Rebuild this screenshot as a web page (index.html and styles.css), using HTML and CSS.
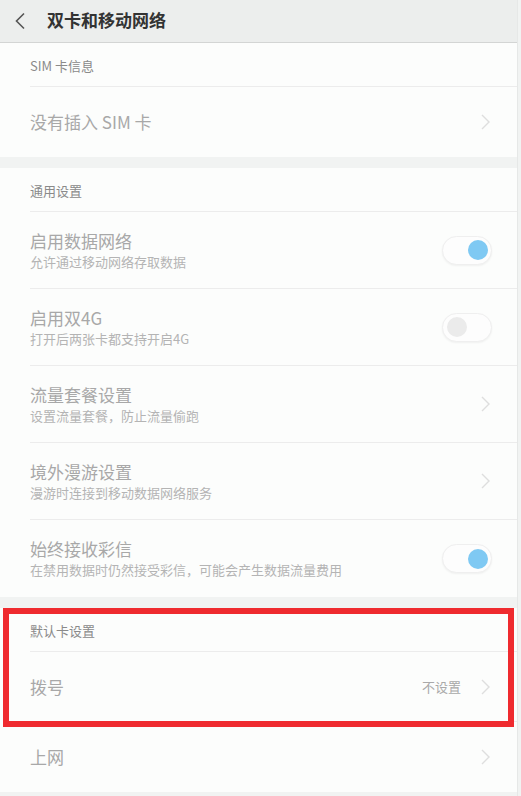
FILE: index.html
```html
<!DOCTYPE html>
<html lang="zh-CN">
<head>
<meta charset="utf-8">
<title>双卡和移动网络</title>
<link rel="stylesheet" href="styles.css">
</head>
<body>
<div class="page">
  <header class="topbar">
    <svg class="back" width="12" height="18" viewBox="0 0 12 18"><path d="M10 1.5 L2.5 9 L10 16.5" fill="none" stroke="#555" stroke-width="1.6"/></svg>
    <h1 class="title">双卡和移动网络</h1>
  </header>

  <section class="group">
    <div class="group-head">SIM 卡信息</div>
    <div class="row single last">
      <div class="texts"><div class="row-title">没有插入 SIM 卡</div></div>
      <svg class="chev" width="9" height="16" viewBox="0 0 9 16"><path d="M1 1 L8 8 L1 15" fill="none" stroke="#dedede" stroke-width="1.4"/></svg>
    </div>
  </section>

  <section class="group">
    <div class="group-head">通用设置</div>
    <div class="row double">
      <div class="texts"><div class="row-title">启用数据网络</div><div class="row-sub">允许通过移动网络存取数据</div></div>
      <div class="switch on"><span class="knob"></span></div>
    </div>
    <div class="row double">
      <div class="texts"><div class="row-title">启用双4G</div><div class="row-sub">打开后两张卡都支持开启4G</div></div>
      <div class="switch off"><span class="knob"></span></div>
    </div>
    <div class="row double">
      <div class="texts"><div class="row-title">流量套餐设置</div><div class="row-sub">设置流量套餐，防止流量偷跑</div></div>
      <svg class="chev" width="9" height="16" viewBox="0 0 9 16"><path d="M1 1 L8 8 L1 15" fill="none" stroke="#dedede" stroke-width="1.4"/></svg>
    </div>
    <div class="row double">
      <div class="texts"><div class="row-title">境外漫游设置</div><div class="row-sub">漫游时连接到移动数据网络服务</div></div>
      <svg class="chev" width="9" height="16" viewBox="0 0 9 16"><path d="M1 1 L8 8 L1 15" fill="none" stroke="#dedede" stroke-width="1.4"/></svg>
    </div>
    <div class="row double last">
      <div class="texts"><div class="row-title">始终接收彩信</div><div class="row-sub">在禁用数据时仍然接受彩信，可能会产生数据流量费用</div></div>
      <div class="switch on"><span class="knob"></span></div>
    </div>
  </section>

  <section class="group marked">
    <div class="group-head">默认卡设置</div>
    <div class="row single">
      <div class="texts"><div class="row-title">拨号</div></div>
      <span class="value">不设置</span>
      <svg class="chev" width="9" height="16" viewBox="0 0 9 16"><path d="M1 1 L8 8 L1 15" fill="none" stroke="#dedede" stroke-width="1.4"/></svg>
    </div>
    <div class="row single last">
      <div class="texts"><div class="row-title">上网</div></div>
      <svg class="chev" width="9" height="16" viewBox="0 0 9 16"><path d="M1 1 L8 8 L1 15" fill="none" stroke="#dedede" stroke-width="1.4"/></svg>
    </div>
    <div class="highlight"></div>
  </section>
</div>
</body>
</html>
```

FILE: styles.css
```css
* { box-sizing: border-box; }
html, body { margin: 0; padding: 0; }
body {
  background: #f1f3f2;
  font-family: "Noto Sans CJK SC", "Noto Sans", sans-serif;
  width: 521px;
  height: 796px;
  overflow: hidden;
}
.page {
  width: 518px;
  border-right: 1px solid #e6e8e7;
  min-height: 796px;
}
.topbar {
  height: 43px;
  background: #eceeed;
  border-bottom: 1px solid #d3d5d4;
  display: flex;
  align-items: center;
}
.back {
  margin-left: 14px;
  margin-top: -1px;
}
.title {
  margin: 0 0 0 21px;
  font-size: 17px;
  font-weight: bold;
  color: #333;
  line-height: 20px;
  margin-top: -2px;
}
.group {
  background: #fcfdfc;
  margin-bottom: 11px;
}
.group.marked { position: relative; margin-bottom: 0; }
.group-head {
  margin-left: 30px;
  height: 44px;
  border-bottom: 1px solid #ececec;
  display: flex;
  align-items: center;
  font-size: 13px;
  color: #8a8a8a;
  padding-top: 1px;
}
.row {
  margin-left: 30px;
  padding-right: 26px;
  display: flex;
  align-items: center;
  border-bottom: 1px solid #ececec;
}
.row.last { border-bottom: none; }
.row.single { height: 70px; }
.row.double { height: 77px; }
.texts { flex: 1; }
.row-title {
  font-size: 17px;
  line-height: 22px;
  color: #a8a8a8;
}
.row-sub {
  font-size: 13px;
  line-height: 18px;
  color: #b4b4b4;
  margin-top: 1px;
}
.chev { margin-right: 1px; }
.value {
  font-size: 13px;
  color: #a9a9a9;
  margin-right: 20px;
}
.switch {
  width: 50px;
  height: 29px;
  border-radius: 15px;
  border: 1px solid #efefef;
  background: #fdfdfd;
  box-shadow: 0 1px 2px rgba(0,0,0,0.05);
  position: relative;
  margin-right: -1px;
}
.switch .knob {
  position: absolute;
  top: 3.5px;
  width: 20px;
  height: 20px;
  border-radius: 50%;
}
.switch.on .knob { right: 3px; background: #7fc9f3; }
.switch.off .knob { left: 4px; background: #ebebeb; }
.highlight {
  position: absolute;
  top: 0;
  left: 3px;
  width: 511px;
  height: 119px;
  border: 6px solid #ef2b2f;
  pointer-events: none;
}
```
